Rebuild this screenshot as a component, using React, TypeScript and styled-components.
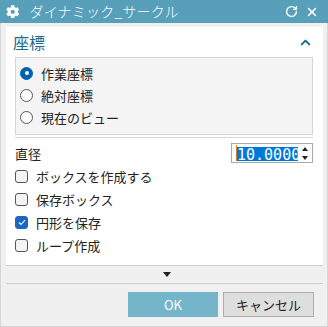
import React from 'react'
import styled, { createGlobalStyle } from 'styled-components'
import { FaCog } from 'react-icons/fa'
import { RotateCw, X, ChevronUp } from 'lucide-react'

const GlobalStyle = createGlobalStyle`
  html, body {
    margin: 0;
    padding: 0;
    background: #f0f0f0;
  }
  body {
    font-family: "Noto Sans CJK JP", "Noto Sans", sans-serif;
  }
`

const Window = styled.div`
  width: 328px;
  height: 327px;
  box-sizing: border-box;
  display: flex;
  flex-direction: column;
  background: #f0f0f0;
`

const TitleBar = styled.div`
  height: 23px;
  flex: none;
  background: #589fba;
  color: #fff;
  display: flex;
  align-items: center;
  padding: 0 9px 0 6px;
  gap: 10px;
`

const Title = styled.div`
  flex: 1;
  font-size: 14px;
  font-weight: 300;
  letter-spacing: 0.2px;
  line-height: 23px;
`

const TitleTools = styled.div`
  display: flex;
  align-items: center;
  gap: 7px;
`

const Body = styled.div`
  flex: 1;
  border: 1px solid #d6d6d6;
  border-top: none;
  display: flex;
  flex-direction: column;
  padding: 4px 4px 0 5px;
`

const Panel = styled.div`
  background: #fff;
  border-bottom: 1px solid #cfcfcf;
  padding: 0 9px 8px 9px;
  display: flex;
  flex-direction: column;
`

const SectionHeader = styled.div`
  height: 30px;
  display: flex;
  align-items: center;
  justify-content: space-between;
  color: #1b6b8f;
  font-size: 16px;
  margin-left: -2px;
  padding-right: 1px;
`

const Group = styled.div`
  background: #f4f4f4;
  border: 1px solid #d6d6d6;
  margin-right: 1px;
  padding: 4px 0 6px;
`

const Separator = styled.div`
  height: 1px;
  background: #d8d8d8;
  margin: 2px 1px 0 0;
`

const OptionRow = styled.label<{ $h: number }>`
  height: ${p => p.$h}px;
  display: flex;
  align-items: center;
  gap: 8px;
  font-size: 13px;
  color: #222;
`

const RadioRow = styled(OptionRow)`
  padding-left: 4px;
`

const Radio = styled.span<{ $on?: boolean }>`
  width: 13px;
  height: 13px;
  box-sizing: border-box;
  border-radius: 50%;
  flex: none;
  position: relative;
  background: ${p => (p.$on ? '#0063b1' : '#fff')};
  border: 1px solid ${p => (p.$on ? '#0063b1' : '#555')};
  &::after {
    content: '';
    display: ${p => (p.$on ? 'block' : 'none')};
    position: absolute;
    left: 3.5px;
    top: 3.5px;
    width: 4px;
    height: 4px;
    border-radius: 50%;
    background: #fff;
  }
`

const Box = styled.span<{ $on?: boolean }>`
  width: 13px;
  height: 13px;
  box-sizing: border-box;
  border-radius: 3px;
  flex: none;
  display: flex;
  align-items: center;
  justify-content: center;
  background: ${p => (p.$on ? '#1a68c0' : '#f4f4f4')};
  border: 1px solid ${p => (p.$on ? '#1a68c0' : '#555')};
`

const FieldRow = styled.div`
  height: 20px;
  margin-top: 5px;
  margin-bottom: 2px;
  display: flex;
  align-items: center;
  justify-content: space-between;
  font-size: 13px;
  color: #222;
  padding-right: 1px;
`

const NumberBox = styled.div`
  width: 82px;
  height: 20px;
  box-sizing: border-box;
  border: 1px solid #a9a9a9;
  background: #fff;
  display: flex;
  align-items: center;
  padding-left: 4px;
`

const NumberText = styled.div`
  flex: 1;
  overflow: hidden;
  white-space: nowrap;
  height: 16px;
  border-left: 1px solid #e07b1c;
`

const Selected = styled.span`
  background: #0078d7;
  color: #fff;
  font-family: "DejaVu Sans Mono", monospace;
  font-size: 15px;
  line-height: 16px;
  display: inline-block;
`

const Spinner = styled.div`
  width: 14px;
  display: flex;
  flex-direction: column;
  align-items: center;
  gap: 5px;
`

const Tri = styled.span<{ $up?: boolean }>`
  width: 0;
  height: 0;
  border-left: 3px solid transparent;
  border-right: 3px solid transparent;
  ${p => (p.$up ? 'border-bottom: 4px solid #222;' : 'border-top: 4px solid #222;')}
`

const MoreBar = styled.div`
  height: 17px;
  border-bottom: 1px solid #cfcfcf;
  display: flex;
  align-items: center;
  justify-content: center;
`

const DownArrow = styled.span`
  width: 0;
  height: 0;
  border-left: 4px solid transparent;
  border-right: 4px solid transparent;
  border-top: 5px solid #222;
  margin-left: 4px;
`

const Footer = styled.div`
  display: flex;
  justify-content: flex-end;
  gap: 5px;
  padding: 8px 9px 0 0;
`

const Button = styled.button<{ $primary?: boolean }>`
  width: ${p => (p.$primary ? 90 : 91)}px;
  height: 25px;
  box-sizing: border-box;
  font-family: "Noto Sans CJK JP", "Noto Sans", sans-serif;
  font-size: 13px;
  padding: 0;
  background: ${p => (p.$primary ? '#74b5ca' : '#dedede')};
  color: ${p => (p.$primary ? '#fff' : '#222')};
  border: 1px solid ${p => (p.$primary ? '#74b5ca' : '#adadad')};
`

const radios = [
  { label: '作業座標', on: true },
  { label: '絶対座標' },
  { label: '現在のビュー' },
]

const checks = [
  { label: 'ボックスを作成する' },
  { label: '保存ボックス' },
  { label: '円形を保存', on: true },
  { label: 'ループ作成' },
]

const App = () => {
  return (
    <Window>
      <GlobalStyle />
      <TitleBar>
        <FaCog size={13.5} />
        <Title>ダイナミック_サークル</Title>
        <TitleTools>
          <RotateCw size={13} strokeWidth={2.6} />
          <X size={14} strokeWidth={2.6} />
        </TitleTools>
      </TitleBar>
      <Body>
        <Panel>
          <SectionHeader>
            <span>座標</span>
            <ChevronUp size={15} strokeWidth={3.2} />
          </SectionHeader>
          <Group>
            {radios.map(r => (
              <RadioRow key={r.label} $h={22}>
                <Radio $on={r.on} />
                {r.label}
              </RadioRow>
            ))}
          </Group>
          <Separator />
          <FieldRow>
            <span>直径</span>
            <NumberBox>
              <NumberText>
                <Selected>10.0000</Selected>
              </NumberText>
              <Spinner>
                <Tri $up />
                <Tri />
              </Spinner>
            </NumberBox>
          </FieldRow>
          {checks.map(c => (
            <OptionRow key={c.label} $h={23}>
              <Box $on={c.on}>
                {c.on && (
                  <svg width="8" height="7" viewBox="0 0 8 7">
                    <path d="M1 3.5 L3 5.5 L7 1.2" fill="none" stroke="#fff" strokeWidth="1.1" />
                  </svg>
                )}
              </Box>
              {c.label}
            </OptionRow>
          ))}
        </Panel>
        <MoreBar>
          <DownArrow />
        </MoreBar>
        <Footer>
          <Button $primary>OK</Button>
          <Button>キャンセル</Button>
        </Footer>
      </Body>
    </Window>
  )
}

export default App
